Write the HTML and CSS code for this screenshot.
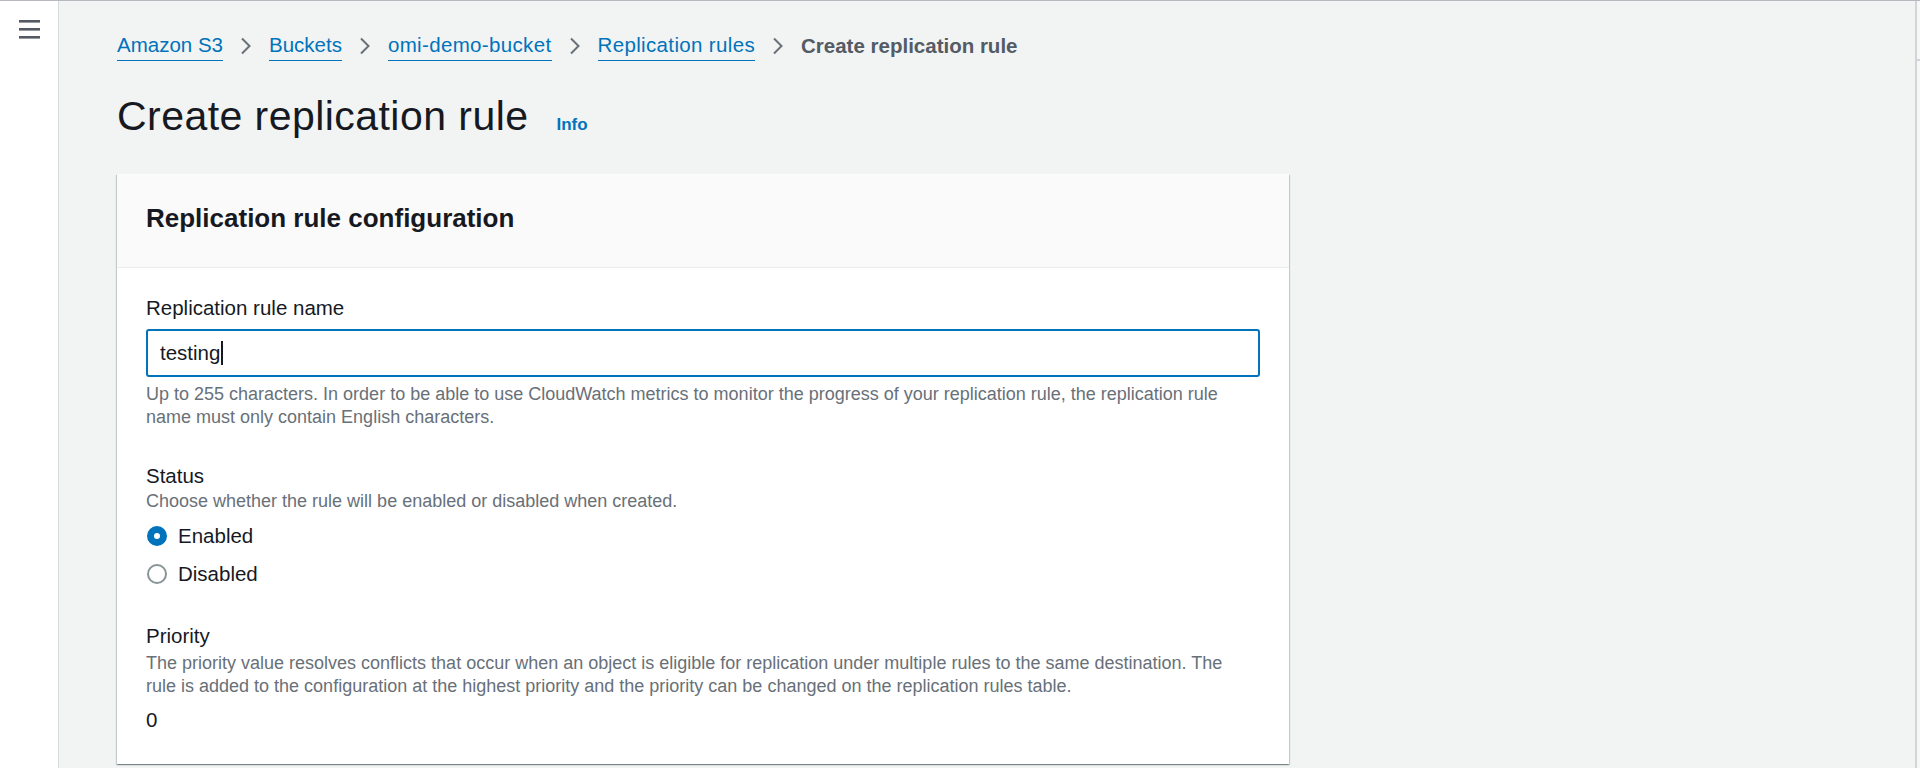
FILE: index.html
```html
<!DOCTYPE html>
<html lang="en">
<head>
<meta charset="utf-8">
<title>Create replication rule</title>
<link rel="stylesheet" href="styles.css">
</head>
<body>
<div class="app">
  <nav class="sidebar">
    <button class="menu" aria-label="Open navigation">
      <svg width="21" height="19" viewBox="0 0 21 19"><rect x="0" y="0" width="21" height="2.6" fill="#545b64"/><rect x="0" y="8" width="21" height="2.6" fill="#545b64"/><rect x="0" y="16" width="21" height="2.6" fill="#545b64"/></svg>
    </button>
  </nav>
  <main class="content">
    <nav class="breadcrumbs">
      <a class="crumb-link" href="#">Amazon S3</a>
      <svg class="sep" width="14" height="18" viewBox="0 0 14 18"><path d="M3 1.5 L10.5 9 L3 16.5" fill="none" stroke="#687078" stroke-width="2"/></svg>
      <a class="crumb-link" href="#">Buckets</a>
      <svg class="sep" width="14" height="18" viewBox="0 0 14 18"><path d="M3 1.5 L10.5 9 L3 16.5" fill="none" stroke="#687078" stroke-width="2"/></svg>
      <a class="crumb-link crumb-wide" href="#">omi-demo-bucket</a>
      <svg class="sep" width="14" height="18" viewBox="0 0 14 18"><path d="M3 1.5 L10.5 9 L3 16.5" fill="none" stroke="#687078" stroke-width="2"/></svg>
      <a class="crumb-link crumb-wide" href="#">Replication rules</a>
      <svg class="sep" width="14" height="18" viewBox="0 0 14 18"><path d="M3 1.5 L10.5 9 L3 16.5" fill="none" stroke="#687078" stroke-width="2"/></svg>
      <span class="crumb-current">Create replication rule</span>
    </nav>

    <div class="page-header">
      <h1>Create replication rule</h1>
      <a class="info" href="#">Info</a>
    </div>

    <section class="card">
      <header class="card-header">
        <h2>Replication rule configuration</h2>
      </header>
      <div class="card-body">
        <div class="field">
          <div class="label">Replication rule name</div>
          <div class="input"><span class="input-value">testing</span><span class="caret"></span></div>
          <div class="hint">Up to 255 characters. In order to be able to use CloudWatch metrics to monitor the progress of your replication rule, the replication rule<br>name must only contain English characters.</div>
        </div>

        <div class="field field-status">
          <div class="label">Status</div>
          <div class="desc">Choose whether the rule will be enabled or disabled when created.</div>
          <div class="radio-group">
            <div class="radio"><span class="radio-circle checked"></span><span class="radio-label">Enabled</span></div>
            <div class="radio"><span class="radio-circle"></span><span class="radio-label">Disabled</span></div>
          </div>
        </div>

        <div class="field field-priority">
          <div class="label">Priority</div>
          <div class="desc desc-priority">The priority value resolves conflicts that occur when an object is eligible for replication under multiple rules to the same destination. The<br>rule is added to the configuration at the highest priority and the priority can be changed on the replication rules table.</div>
          <div class="value">0</div>
        </div>
      </div>
    </section>
  </main>
  <div class="right-rail"></div>
</div>
</body>
</html>
```

FILE: styles.css
```css
html, body {
  margin: 0;
  padding: 0;
  height: 100%;
}

body {
  font-family: "Liberation Sans", Arial, sans-serif;
  background: #f2f3f3;
  color: #16191f;
  overflow: hidden;
}

.app {
  display: flex;
  height: 768px;
  box-sizing: border-box;
  border-top: 1px solid #b6b9bd;
}

.sidebar {
  width: 58px;
  flex: none;
  background: #ffffff;
  border-right: 1px solid #d5dbdb;
}

.menu {
  display: block;
  margin: 19px 0 0 19px;
  padding: 0;
  border: 0;
  background: none;
  width: 21px;
  height: 19px;
  line-height: 0;
}

.content {
  flex: 1;
  min-width: 0;
  padding: 31px 0 0 58px;
}

.right-rail {
  width: 3px;
  flex: none;
  border-left: 2px solid #d1d5d8;
  background: linear-gradient(#d1d5d8, #d1d5d8) no-repeat 0 58px / 100% 2px, #f7f7f7;
}

/* Breadcrumbs */
.breadcrumbs {
  display: flex;
  align-items: center;
  height: 28px;
  font-size: 20.5px;
  line-height: 28px;
  white-space: nowrap;
}

.crumb-link {
  color: #0073bb;
  text-decoration: none;
  border-bottom: 1px solid #0073bb;
  padding-bottom: 1.5px;
}

.crumb-wide {
  letter-spacing: 0.35px;
}

.sep {
  flex: none;
  margin: 0 16px;
}

.crumb-current {
  font-weight: bold;
  color: #545b64;
}

/* Page header */
.page-header {
  display: flex;
  align-items: baseline;
  margin-top: 31px;
}

.page-header h1 {
  margin: 0;
  font-size: 41px;
  line-height: 50px;
  font-weight: 400;
  letter-spacing: 0.45px;
  color: #16191f;
}

.info {
  margin-left: 28px;
  font-size: 17px;
  font-weight: bold;
  color: #0073bb;
  text-decoration: none;
}

/* Card */
.card {
  margin-top: 33px;
  width: 1172px;
  background: #ffffff;
  box-shadow: 0 1px 1px 0 rgba(0, 28, 36, 0.3), 1px 1px 1px 0 rgba(0, 28, 36, 0.15), -1px 1px 1px 0 rgba(0, 28, 36, 0.15);
}

.card-header {
  background: #fafafa;
  border-bottom: 1px solid #eaeded;
  padding: 27px 29px 32px;
}

.card-header h2 {
  margin: 0;
  font-size: 26px;
  line-height: 34px;
  font-weight: bold;
  color: #16191f;
}

.card-body {
  padding: 26px 29px 30px;
}

.label {
  font-size: 20.5px;
  line-height: 28px;
  color: #16191f;
}

.input {
  display: flex;
  align-items: center;
  box-sizing: border-box;
  height: 48px;
  margin-top: 7px;
  padding: 0 12px;
  border: 2px solid #0073bb;
  border-radius: 3px;
  background: #ffffff;
  font-size: 20.5px;
  color: #16191f;
}

.caret {
  display: inline-block;
  width: 1.5px;
  height: 24px;
  margin-left: 1px;
  background: #16191f;
}

.hint,
.desc {
  font-size: 18px;
  line-height: 23px;
  color: #687078;
}

.hint {
  margin-top: 6px;
}

.field-status {
  margin-top: 33px;
}

.radio-group {
  display: flex;
  flex-direction: column;
  gap: 10px;
  margin-top: 9px;
}

.radio {
  display: flex;
  align-items: center;
  height: 28px;
}

.radio-circle {
  box-sizing: border-box;
  width: 20px;
  height: 20px;
  margin: 0 11px 0 1px;
  border-radius: 50%;
  border: 2px solid #879596;
  background: #ffffff;
}

.radio-circle.checked {
  border: 7px solid #0073bb;
}

.radio-label {
  font-size: 20.5px;
  line-height: 28px;
  color: #16191f;
}

.field-priority {
  margin-top: 34px;
}

.desc-priority {
  margin-top: 2px;
}

.value {
  margin-top: 8px;
  font-size: 20.5px;
  line-height: 28px;
  color: #16191f;
}
```
